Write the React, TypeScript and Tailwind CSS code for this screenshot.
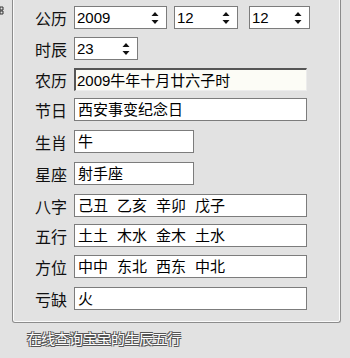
import type { ReactNode } from "react";

const font = "font-['Liberation_Sans','Noto_Sans_CJK_SC',sans-serif]";

function Spin() {
  return (
    <svg width="8" height="14" viewBox="0 0 8 14" className="shrink-0">
      <path d="M4 1 L7.5 5 L0.5 5 Z" fill="#111" />
      <path d="M0.5 9 L7.5 9 L4 13 Z" fill="#111" />
    </svg>
  );
}

function SpinBox({ value, width }: { value: string; width: string }) {
  return (
    <div className={`flex items-center justify-between h-[23px] ${width} bg-white border border-[#7c7c7c] pl-[2px] pr-[7px] text-[15px] text-black leading-none`}>
      <span>{value}</span>
      <Spin />
    </div>
  );
}

function Row({ label, children, className = "" }: { label: string; children: ReactNode; className?: string }) {
  return (
    <div className={`flex items-center h-[23px] ${className}`}>
      <div className="w-[61px] pr-[7px] pt-[4px] text-right text-[16px] text-[#111] leading-none">{label}</div>
      {children}
    </div>
  );
}

function Field({ children, width = "w-[233px]" }: { children: ReactNode; width?: string }) {
  return (
    <div className={`flex items-center h-[23px] ${width} bg-white border border-[#7c7c7c] pl-[3px] text-[15px] text-black leading-none whitespace-pre`}>
      {children}
    </div>
  );
}

function Groups({ items }: { items: string[] }) {
  return (
    <div className="flex gap-[9px]">
      {items.map((t) => (
        <span key={t}>{t}</span>
      ))}
    </div>
  );
}

export default function App() {
  return (
    <div className={`w-[350px] h-[358px] bg-[#e2e2e2] flex flex-col overflow-hidden ${font}`}>
      <div className="flex h-[323px]">
        {/* clipped neighbour control at the left edge */}
        <div className="w-[12px] pt-[6px]">
          <svg width="4" height="9" viewBox="0 0 4 9">
            <path d="M0 1 H3 V4 H0 Z M0 5 H3 V8 H0 Z" fill="none" stroke="#333" strokeWidth="1" />
          </svg>
        </div>

        {/* group box, top edge out of view */}
        <div className="w-[329px] border-x border-b border-[#8c8c8c] rounded-b-[3px] shadow-[inset_1px_0_0_#fafafa,inset_-1px_0_0_#fafafa,inset_0_-1px_0_#fafafa] flex flex-col">
          <Row label="公历" className="mt-[6px]">
            <div className="flex">
              <SpinBox value="2009" width="w-[93px]" />
              <div className="ml-[7px]">
                <SpinBox value="12" width="w-[64px]" />
              </div>
              <div className="ml-[11px]">
                <SpinBox value="12" width="w-[61px]" />
              </div>
            </div>
          </Row>
          <Row label="时辰" className="mt-[8px]">
            <SpinBox value="23" width="w-[64px]" />
          </Row>
          <Row label="农历" className="mt-[8px]">
            <div className="flex items-center h-[23px] w-[233px] bg-[#fcfcf6] border-t-2 border-l-2 border-t-[#555] border-l-[#555] border-r border-b border-r-[#ececec] border-b-[#ececec] pl-[1px] text-[15px] text-black leading-none">
              2009牛年十月廿六子时
            </div>
          </Row>
          <Row label="节日" className="mt-[7px]">
            <Field>西安事变纪念日</Field>
          </Row>
          <Row label="生肖" className="mt-[9px]">
            <Field width="w-[120px]">牛</Field>
          </Row>
          <Row label="星座" className="mt-[9px]">
            <Field width="w-[120px]">射手座</Field>
          </Row>
          <Row label="八字" className="mt-[9px]">
            <Field>
              <Groups items={["己丑", "乙亥", "辛卯", "戊子"]} />
            </Field>
          </Row>
          <Row label="五行" className="mt-[7px]">
            <Field>
              <Groups items={["土土", "木水", "金木", "土水"]} />
            </Field>
          </Row>
          <Row label="方位" className="mt-[8px]">
            <Field>
              <Groups items={["中中", "东北", "西东", "中北"]} />
            </Field>
          </Row>
          <Row label="亏缺" className="mt-[9px]">
            <Field>火</Field>
          </Row>
        </div>
      </div>

      <div className="pl-[27px] pt-[9px] text-[14px] leading-none text-white [text-shadow:1px_1px_0_#555,-1px_-1px_0_#555,1px_-1px_0_#555,-1px_1px_0_#555]">
        在线查询宝宝的生辰五行
      </div>
    </div>
  );
}
